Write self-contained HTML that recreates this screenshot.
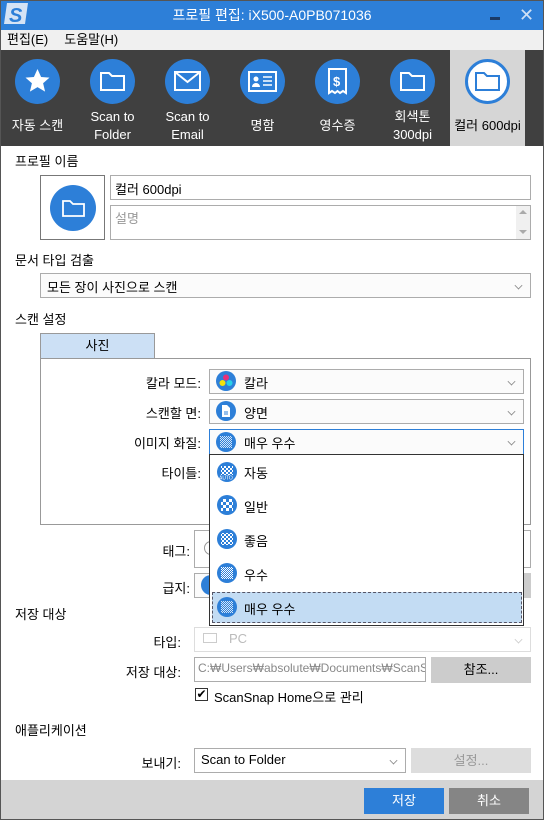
<!DOCTYPE html>
<html><head><meta charset="utf-8">
<style>
*{box-sizing:border-box;margin:0;padding:0}
body{width:544px;height:820px;overflow:hidden;font-family:"Liberation Sans","Noto Sans CJK KR",sans-serif;font-size:13px;color:#000;background:#fff;position:relative}
.a{position:absolute}
.win{left:0;top:0;width:544px;height:820px;border:1px solid #555;}
.title{left:0;top:0;width:544px;height:30px;background:#2d7fd8;color:#fff;text-align:center;line-height:30px;font-size:14px}
.menu{left:0;top:30px;width:544px;height:20px;background:#f0f0f0;font-size:13px;line-height:20px}
.tb{left:0;top:50px;width:544px;height:96px;background:#404040}
.circ{width:45px;height:45px;border-radius:50%;background:#2d7fd8;top:59px}
.lbl{color:#fff;text-align:center;width:75px;font-size:13px;line-height:18px}
.inp{border:1px solid #acacac;background:#fff}
.dd{border:1px solid #acacac;background:#fbfbfb}
.chev{position:absolute;right:8px;top:50%;margin-top:-4px;width:7px;height:7px;border-right:1px solid #888;border-bottom:1px solid #888;transform:rotate(45deg) scale(.8)}
.rl{text-align:right;width:180px}
.ic{position:absolute;width:20px;height:20px;border-radius:50%;background:#2d7fd8}
</style></head><body>
<div class="a title">프로필 편집: iX500-A0PB071036</div>
<svg class="a" style="left:3px;top:2px" width="26" height="24"><path d="M4 1h21l-3 21H1z" fill="#e8eef8" opacity=".9"/><text x="6" y="20" font-size="20" font-weight="bold" font-style="italic" fill="#2d7fd8" font-family="Liberation Sans">S</text></svg>
<div class="a" style="left:490px;top:17px;width:10px;height:3px;background:#1a3a66"></div>
<div class="a" style="left:519px;top:5px;color:#cfe0f5;font-size:18px">✕</div>
<div class="a menu"><span style="margin-left:7px">편집(E)</span><span style="margin-left:16px">도움말(H)</span></div>
<div class="a tb"></div>
<div class="a" style="left:450px;top:50px;width:75px;height:96px;background:#d6d6d6"></div>

<div class="a circ" style="left:15px"></div>
<svg class="a" style="left:15px;top:59px" width="45" height="45"><path d="M22.5 10l3.6 8 8.4.6-6.4 5.6 2 8.4-7.6-4.5-7.6 4.5 2-8.4-6.4-5.6 8.4-.6z" fill="#fff"/></svg>
<div class="a circ" style="left:90px"></div>
<svg class="a" style="left:90px;top:59px" width="45" height="45"><path d="M11 14h8l3 3h12v14H11z" fill="none" stroke="#fff" stroke-width="2"/></svg>
<div class="a circ" style="left:165px"></div>
<svg class="a" style="left:165px;top:59px" width="45" height="45"><rect x="10" y="13" width="25" height="18" fill="none" stroke="#fff" stroke-width="2"/><path d="M10 13l12.5 10L35 13" fill="none" stroke="#fff" stroke-width="2"/></svg>
<div class="a circ" style="left:240px"></div>
<svg class="a" style="left:240px;top:59px" width="45" height="45"><rect x="9" y="13" width="27" height="19" fill="none" stroke="#fff" stroke-width="2"/><circle cx="16" cy="20" r="2.5" fill="#fff"/><path d="M12 28a4 4 0 018 0z" fill="#fff"/><path d="M23 18h9M23 22h9M23 26h9" stroke="#fff" stroke-width="1.6"/></svg>
<div class="a circ" style="left:315px"></div>
<svg class="a" style="left:315px;top:59px" width="45" height="45"><path d="M14 10h17v24l-3-2-3 2-2.5-2-2.5 2-3-2-3 2z" fill="none" stroke="#fff" stroke-width="2"/><text x="18" y="27" fill="#fff" font-size="13" font-weight="bold" font-family="Liberation Sans">$</text></svg>
<div class="a circ" style="left:390px"></div>
<svg class="a" style="left:390px;top:59px" width="45" height="45"><path d="M11 14h8l3 3h12v14H11z" fill="none" stroke="#fff" stroke-width="2"/></svg>
<div class="a circ" style="left:465px;background:#fff;border:3px solid #2d7fd8"></div>
<svg class="a" style="left:465px;top:59px" width="45" height="45"><path d="M11 14h8l3 3h12v14H11z" fill="none" stroke="#2d7fd8" stroke-width="2"/></svg>

<div class="a lbl" style="left:0;top:117px">자동 스캔</div>
<div class="a lbl" style="left:75px;top:108px">Scan to<br>Folder</div>
<div class="a lbl" style="left:150px;top:108px">Scan to<br>Email</div>
<div class="a lbl" style="left:225px;top:117px">명함</div>
<div class="a lbl" style="left:300px;top:117px">영수증</div>
<div class="a lbl" style="left:375px;top:108px">회색톤<br>300dpi</div>
<div class="a lbl" style="left:450px;top:117px;color:#000">컬러 600dpi</div>

<div class="a" style="left:15px;top:151px">프로필 이름</div>
<div class="a" style="left:40px;top:175px;width:65px;height:65px;border:1px solid #777;background:#fff"></div>
<div class="a" style="left:50px;top:185px;width:46px;height:46px;border-radius:50%;background:#2d7fd8"></div>
<svg class="a" style="left:50px;top:185px" width="46" height="46"><path d="M13 16h7l3 3h11v12H13z" fill="none" stroke="#fff" stroke-width="1.8"/></svg>
<div class="a inp" style="left:110px;top:175px;width:421px;height:25px;padding:3px 4px">컬러 600dpi</div>
<div class="a inp" style="left:110px;top:205px;width:421px;height:35px;padding:2px 4px;color:#999">설명</div>
<div class="a" style="left:516px;top:206px;width:14px;height:33px;background:#f0f0f0"></div>
<div class="a" style="left:519px;top:210px;border:4px solid transparent;border-bottom:4px solid #aaa;border-top:0"></div>
<div class="a" style="left:519px;top:230px;border:4px solid transparent;border-top:4px solid #aaa;border-bottom:0"></div>

<div class="a" style="left:15px;top:250px">문서 타입 검출</div>
<div class="a dd" style="left:40px;top:273px;width:491px;height:25px;padding:3px 6px">모든 장이 사진으로 스캔<span class="chev"></span></div>
<div class="a" style="left:15px;top:309px">스캔 설정</div>
<div class="a" style="left:40px;top:333px;width:115px;height:26px;background:#cce0f5;border:1px solid #999;border-bottom:0;text-align:center;line-height:24px">사진</div>
<div class="a" style="left:40px;top:358px;width:491px;height:167px;border:1px solid #999;background:#fff"></div>

<div class="a rl" style="left:21px;top:373px">칼라 모드:</div>
<div class="a dd" style="left:209px;top:369px;width:315px;height:25px;padding:3px 0 0 34px">칼라<span class="chev"></span></div>
<div class="ic" style="left:216px;top:371px"></div>
<svg class="a" style="left:216px;top:371px" width="20" height="20"><circle cx="10" cy="6.5" r="3" fill="#e8307a"/><circle cx="6.5" cy="12" r="3" fill="#f4e20c"/><circle cx="13.5" cy="12" r="3" fill="#28d0e8"/></svg>
<div class="a rl" style="left:21px;top:403px">스캔할 면:</div>
<div class="a dd" style="left:209px;top:399px;width:315px;height:25px;padding:3px 0 0 34px">양면<span class="chev"></span></div>
<div class="ic" style="left:216px;top:401px"></div>
<svg class="a" style="left:216px;top:401px" width="20" height="20"><path d="M6 4h5l3 3v9H6z" fill="#fff"/><path d="M8 11h4M8 13h4" stroke="#2d7fd8"/></svg>
<div class="a rl" style="left:21px;top:433px">이미지 화질:</div>
<div class="a" style="left:209px;top:429px;width:315px;height:26px;border:1px solid #2d7fd8;background:#fbfbfb;padding:3px 0 0 34px">매우 우수<span class="chev"></span></div>
<div class="a rl" style="left:21px;top:463px">타이틀:</div>

<div class="a rl" style="left:10px;top:541px">태그:</div>
<div class="a inp" style="left:194px;top:530px;width:337px;height:38px"></div>
<div class="a" style="left:204px;top:541px;width:14px;height:14px;border:1px solid #999;border-radius:50%"></div>
<div class="a rl" style="left:10px;top:578px">급지:</div>
<div class="a dd" style="left:194px;top:573px;width:337px;height:25px"></div>
<div class="ic" style="left:201px;top:575px"></div>
<div class="a" style="left:503px;top:573px;width:28px;height:25px;background:#ccc"></div>

<div class="a" style="left:209px;top:454px;width:315px;height:172px;border:1px solid #333;background:#fff"></div>
<div class="a" style="left:212px;top:592px;width:310px;height:31px;background:#c3dcf3;border:1px dashed #556"></div>
<svg class="a" style="left:214px;top:460px" width="30" height="160">
<defs>
<pattern id="p1" width="6" height="6" patternUnits="userSpaceOnUse"><rect width="6" height="6" fill="#2d7fd8"/><rect width="3" height="3" fill="#fff"/><rect x="3" y="3" width="3" height="3" fill="#fff"/></pattern>
<pattern id="p2" width="4" height="4" patternUnits="userSpaceOnUse"><rect width="4" height="4" fill="#2d7fd8"/><rect width="2" height="2" fill="#fff"/><rect x="2" y="2" width="2" height="2" fill="#fff"/></pattern>
<pattern id="p3" width="2" height="2" patternUnits="userSpaceOnUse"><rect width="2" height="2" fill="#2d7fd8"/><rect width="1" height="1" fill="#fff"/><rect x="1" y="1" width="1" height="1" fill="#fff"/></pattern>
</defs>
<circle cx="13" cy="12" r="10" fill="#2d7fd8"/><rect x="7" y="6" width="12" height="9" fill="url(#p2)"/><text x="5" y="19.5" font-size="5" fill="#fff" font-family="Liberation Sans">AUTO</text>
<circle cx="13" cy="45" r="10" fill="#2d7fd8"/><rect x="7" y="39" width="12" height="12" fill="url(#p1)"/>
<circle cx="13" cy="79" r="10" fill="#2d7fd8"/><rect x="7" y="73" width="12" height="12" fill="url(#p2)"/>
<circle cx="13" cy="113" r="10" fill="#2d7fd8"/><rect x="7" y="107" width="12" height="12" fill="url(#p3)"/>
<circle cx="13" cy="147" r="10" fill="#2d7fd8"/><rect x="7" y="141" width="12" height="12" fill="url(#p3)" opacity=".8"/>
</svg>
<svg class="a" style="left:216px;top:432px" width="20" height="20"><circle cx="10" cy="10" r="10" fill="#2d7fd8"/><rect x="4" y="4" width="12" height="12" fill="url(#p3)" opacity=".8"/></svg>
<div class="a" style="left:244px;top:463px">자동</div>
<div class="a" style="left:244px;top:497px">일반</div>
<div class="a" style="left:244px;top:531px">좋음</div>
<div class="a" style="left:244px;top:565px">우수</div>
<div class="a" style="left:244px;top:599px">매우 우수</div>

<div class="a" style="left:15px;top:604px">저장 대상</div>
<div class="a rl" style="left:1px;top:632px">타입:</div>
<div class="a" style="left:194px;top:627px;width:337px;height:25px;border:1px solid #ddd;color:#bbb;padding:3px 0 0 34px">PC<span class="chev" style="border-color:#ccc"></span></div>
<div class="a" style="left:203px;top:633px;width:14px;height:10px;border:1.5px solid #ccc"></div>
<div class="a rl" style="left:1px;top:662px">저장 대상:</div>
<div class="a inp" style="left:194px;top:657px;width:232px;height:25px;padding:3px 3px;color:#888;overflow:hidden;white-space:nowrap;font-size:12px">C:₩Users₩absolute₩Documents₩ScanSna</div>
<div class="a" style="left:431px;top:657px;width:100px;height:26px;background:#ccc;text-align:center;line-height:26px">참조...</div>
<div class="a" style="left:195px;top:688px;width:13px;height:13px;border:1px solid #333;background:#fff;font-size:12px;line-height:11px;text-align:center">✔</div>
<div class="a" style="left:214px;top:687px">ScanSnap Home으로 관리</div>
<div class="a" style="left:15px;top:720px">애플리케이션</div>
<div class="a rl" style="left:1px;top:753px">보내기:</div>
<div class="a inp" style="left:194px;top:748px;width:212px;height:25px;padding:3px 6px">Scan to Folder<span class="chev"></span></div>
<div class="a" style="left:411px;top:748px;width:120px;height:25px;background:#ddd;color:#999;text-align:center;line-height:25px">설정...</div>

<div class="a" style="left:0;top:780px;width:544px;height:40px;background:#d4d4d4"></div>
<div class="a" style="left:364px;top:788px;width:80px;height:26px;background:#2d7fd8;color:#fff;text-align:center;line-height:26px">저장</div>
<div class="a" style="left:449px;top:788px;width:80px;height:26px;background:#858585;color:#fff;text-align:center;line-height:26px">취소</div>
<div class="a win"></div>
</body></html>
